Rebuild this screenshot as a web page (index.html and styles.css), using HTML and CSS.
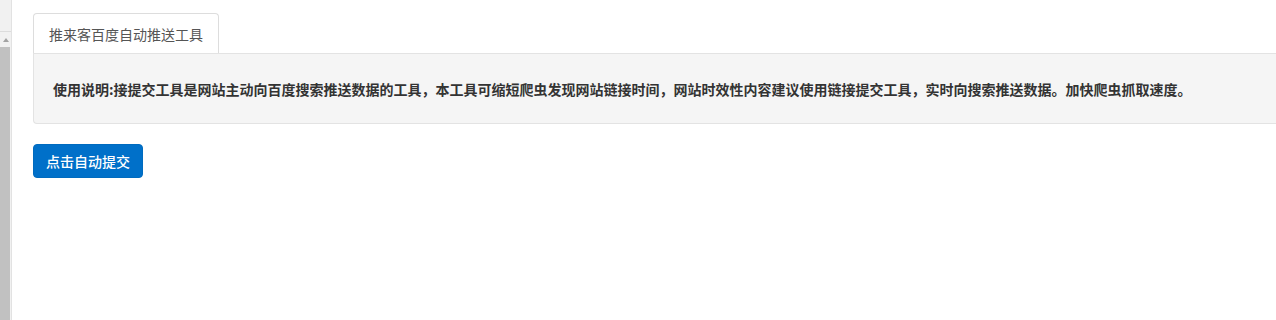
FILE: index.html
```html
<!DOCTYPE html>
<html lang="zh">
<head>
<meta charset="utf-8">
<title>推来客百度自动推送工具</title>
<link rel="stylesheet" href="styles.css">
</head>
<body>
<div class="page">
  <aside class="side">
    <div class="side-top"></div>
    <div class="side-arrow"><span class="tri"></span></div>
    <div class="side-thumb"></div>
  </aside>
  <main class="main">
    <ul class="tabs">
      <li class="tab">推来客百度自动推送工具</li>
    </ul>
    <div class="panel">
      <p class="note">使用说明:接提交工具是网站主动向百度搜索推送数据的工具，本工具可缩短爬虫发现网站链接时间，网站时效性内容建议使用链接提交工具，实时向搜索推送数据。加快爬虫抓取速度。</p>
    </div>
    <button class="btn" type="button">点击自动提交</button>
  </main>
</div>
</body>
</html>
```
FILE: styles.css
```css
html, body {
  margin: 0;
  padding: 0;
  height: 100%;
  background: #fff;
  overflow: hidden;
}
body {
  font-family: "Microsoft YaHei", "Noto Sans CJK SC", "Liberation Sans", sans-serif;
  color: #333;
}
.page {
  display: flex;
  height: 320px;
  width: 100%;
}
.side {
  width: 11px;
  flex: none;
  display: flex;
  flex-direction: column;
  background: #f1f1f1;
  border-right: 1px solid #e2e2e2;
}
.side-top {
  height: 31px;
  border-bottom: 1px solid #dcdcdc;
}
.side-arrow {
  height: 15px;
  display: flex;
  justify-content: center;
  align-items: center;
}
.tri {
  width: 0;
  height: 0;
  border-left: 3px solid transparent;
  border-right: 3px solid transparent;
  border-bottom: 4px solid #a3a3a3;
}
.side-thumb {
  flex: 1;
  background: #c1c1c1;
  margin-right: 1px;
}
.main {
  flex: 1;
  min-width: 0;
  padding: 13px 0 0 21px;
}
.tabs {
  list-style: none;
  margin: 0;
  padding: 0;
  display: flex;
}
.tab {
  font-size: 14px;
  line-height: 20px;
  padding: 10px 15px 9px;
  color: #555;
  background: #fff;
  border: 1px solid #ddd;
  border-bottom: none;
  border-radius: 4px 4px 0 0;
}
.panel {
  background: #f5f5f5;
  border: 1px solid #e3e3e3;
  border-right: none;
  border-radius: 0 0 0 4px;
  padding: 19px 0 19px 19px;
  height: 31px;
  display: flex;
  align-items: center;
}
.note {
  margin: 0;
  font-size: 14px;
  font-weight: 600;
  line-height: 20px;
  color: #333;
  white-space: nowrap;
}
.btn {
  margin-top: 20px;
  font-family: inherit;
  font-size: 14px;
  font-weight: 500;
  line-height: 20px;
  color: #fff;
  background: #0070c9;
  border: 1px solid #006bbf;
  border-radius: 4px;
  padding: 6px 12px;
  cursor: pointer;
}
```
